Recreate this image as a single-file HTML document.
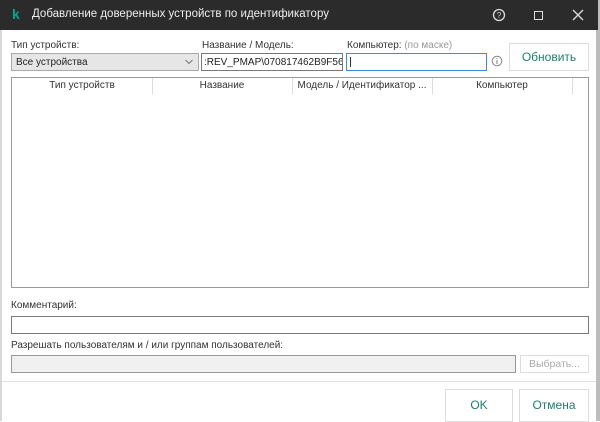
<!DOCTYPE html>
<html><head><meta charset="utf-8"><style>
*{box-sizing:border-box;margin:0;padding:0}
body{width:600px;height:421px;overflow:hidden;background:#fff;font-family:"Liberation Sans","DejaVu Sans",sans-serif;font-size:10px;color:#333;position:relative}
.a{position:absolute}
.title{left:0;top:0;width:598px;height:30px;background:#2b2b2b;color:#eee;font-size:11.5px}
.in{border:1px solid #7a7a7a;background:#fff}
.btn{border:1px solid #ddd;background:#fff;color:#1d7f6e;text-align:center;font-size:12px}
.lbl{font-size:10px;color:#333}
</style></head><body>
<div class="a" style="left:0;top:0;width:2px;height:421px;background:#d8d8d8"></div>
<div class="a" style="left:596px;top:0;width:4px;height:421px;background:#bdbdbd"></div>
<div class="a title">
 <span class="a" style="left:12px;top:6px;color:#00a88e;font-weight:bold;font-size:14px">k</span>
 <span class="a" style="left:32px;top:8px">Добавление доверенных устройств по идентификатору</span>
 <svg class="a" style="left:492px;top:8px" width="14" height="14"><circle cx="7" cy="7" r="5.5" fill="none" stroke="#ddd" stroke-width="1.3"/><text x="7" y="10" font-size="8" fill="#ddd" text-anchor="middle" font-family="Liberation Sans">?</text></svg>
 <div class="a" style="left:534px;top:11px;width:9px;height:9px;border:1.3px solid #ddd"></div>
 <svg class="a" style="left:572px;top:9px" width="12" height="12"><path d="M1 1L11 11M11 1L1 11" stroke="#ddd" stroke-width="1.3"/></svg>
</div>
<div class="a lbl" style="left:11px;top:40px">Тип устройств:</div>
<div class="a lbl" style="left:202px;top:40px">Название / Модель:</div>
<div class="a lbl" style="left:347px;top:40px">Компьютер: <span style="color:#999">(по маске)</span></div>
<div class="a in" style="left:11px;top:53px;width:188px;height:18px;background:#e6e6e6;border-color:#aaa;font-size:10px;padding:3px 4px;color:#222">Все устройства
 <svg class="a" style="right:5px;top:5px" width="8" height="6"><path d="M0.5 1L4 4.5L7.5 1" fill="none" stroke="#777"/></svg></div>
<div class="a in" style="left:201px;top:53px;width:142px;height:18px;font-size:10px;padding:3px 2px;overflow:hidden;white-space:nowrap;color:#222">:REV_PMAP\070817462B9F56&amp;0</div>
<div class="a in" style="left:346px;top:53px;width:141px;height:18px;border-color:#3c8dd6"><div class="a" style="left:3px;top:3px;width:1px;height:10px;background:#333"></div></div>
<svg class="a" style="left:491px;top:55px" width="12" height="12"><circle cx="6" cy="6" r="4.8" fill="none" stroke="#888"/><path d="M6 5v4M6 3v1" stroke="#888" stroke-width="1.1"/></svg>
<div class="a btn" style="left:509px;top:43px;width:80px;height:28px;line-height:26px">Обновить</div>
<div class="a" style="left:11px;top:77px;width:578px;height:211px;border:1px solid #999"></div>
<div class="a lbl" style="left:12px;top:78px;width:576px;height:17px;font-size:10px">
 <span class="a" style="left:0;width:140px;top:2px;text-align:center">Тип устройств</span>
 <span class="a" style="left:140px;width:140px;top:2px;text-align:center">Название</span>
 <span class="a" style="left:280px;width:140px;top:2px;text-align:center;white-space:nowrap">Модель / Идентификатор ...</span>
 <span class="a" style="left:420px;width:140px;top:2px;text-align:center">Компьютер</span>
 <div class="a" style="left:140px;top:0;width:1px;height:16px;background:#ddd"></div>
 <div class="a" style="left:280px;top:0;width:1px;height:16px;background:#ddd"></div>
 <div class="a" style="left:420px;top:0;width:1px;height:16px;background:#ddd"></div>
 <div class="a" style="left:560px;top:0;width:1px;height:16px;background:#ddd"></div>
</div>
<div class="a lbl" style="left:11px;top:300px">Комментарий:</div>
<div class="a in" style="left:11px;top:316px;width:578px;height:18px"></div>
<div class="a lbl" style="left:11px;top:340px">Разрешать пользователям и / или группам пользователей:</div>
<div class="a in" style="left:11px;top:355px;width:505px;height:18px;background:#f0f0f0;border-color:#999"></div>
<div class="a btn" style="left:520px;top:355px;width:69px;height:18px;line-height:16px;color:#aaa;font-size:10.5px">Выбрать...</div>
<div class="a" style="left:2px;top:381px;width:594px;height:1px;background:#e3e3e3"></div>
<div class="a btn" style="left:445px;top:389px;width:68px;height:33px;line-height:31px">OK</div>
<div class="a btn" style="left:519px;top:389px;width:70px;height:33px;line-height:31px">Отмена</div>
</body></html>
